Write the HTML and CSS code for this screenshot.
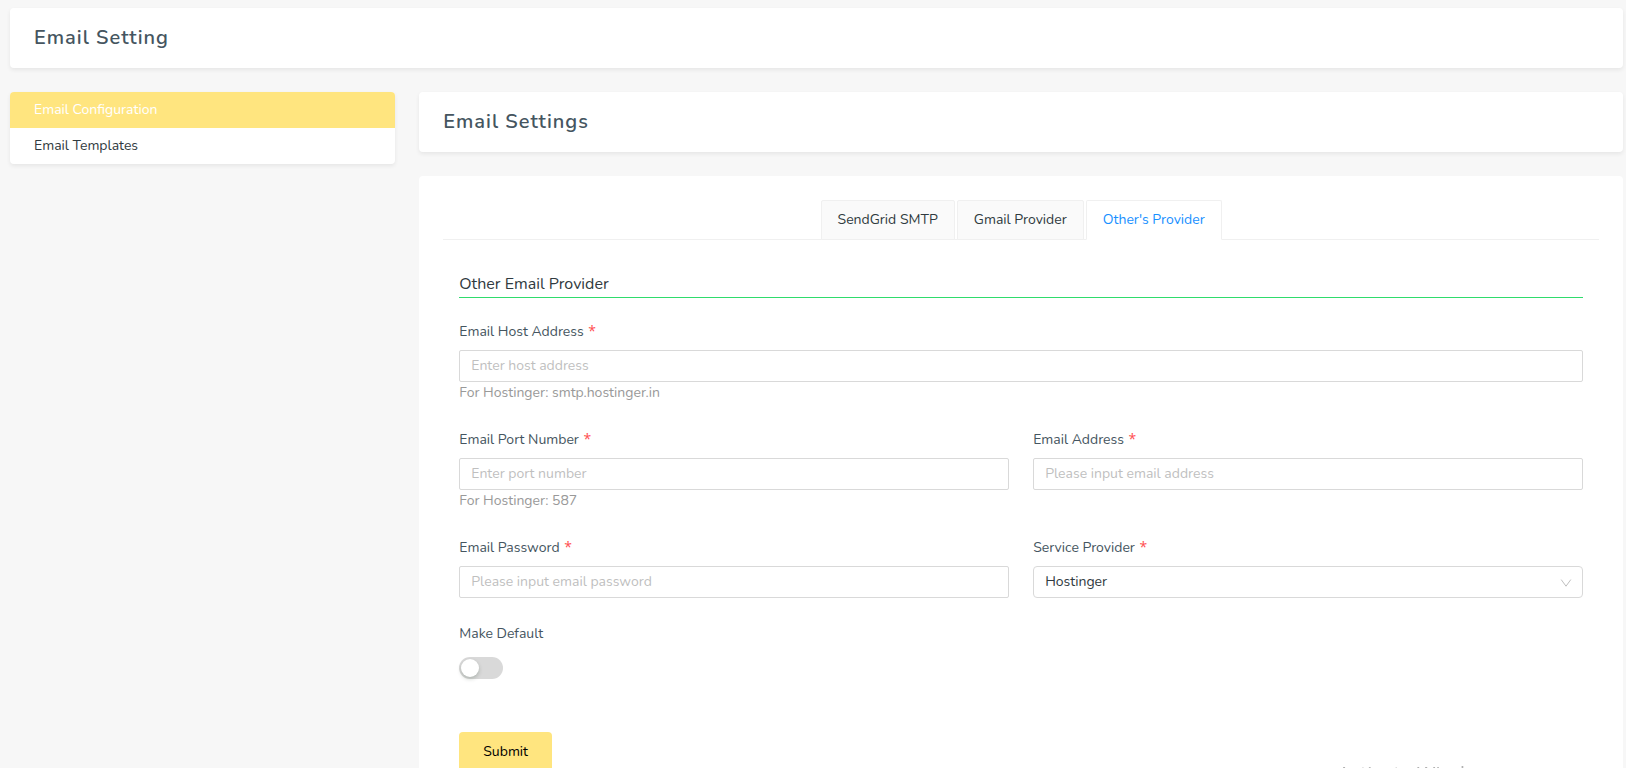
FILE: index.html
```html
<!DOCTYPE html>
<html lang="en">
<head>
<meta charset="utf-8">
<title>Email Setting</title>
<link rel="stylesheet" href="styles.css">
</head>
<body>
<div class="page">
  <header class="card title-card"><h1 class="title">Email Setting</h1></header>
  <div class="layout">
    <nav class="card side-nav">
      <a class="side-link side-link-active" href="#configuration">Email Configuration</a>
      <a class="side-link" href="#templates">Email Templates</a>
    </nav>
    <main class="content">
      <div class="card title-card"><h2 class="title">Email Settings</h2></div>
      <section class="panel">
        <div class="tabs" role="tablist">
          <button class="tab" type="button" role="tab" aria-selected="false">SendGrid SMTP</button>
          <button class="tab" type="button" role="tab" aria-selected="false">Gmail Provider</button>
          <button class="tab tab-active" type="button" role="tab" aria-selected="true">Other's Provider</button>
        </div>
        <form class="form">
          <h3 class="form-title">Other Email Provider</h3>
          <div class="fields">
            <div class="field field-wide">
              <label class="label" for="host">Email Host Address <span class="required">*</span></label>
              <input class="input" id="host" type="text" placeholder="Enter host address">
              <p class="help">For Hostinger: smtp.hostinger.in</p>
            </div>
            <div class="field">
              <label class="label" for="port">Email Port Number <span class="required">*</span></label>
              <input class="input" id="port" type="text" placeholder="Enter port number">
              <p class="help">For Hostinger: 587</p>
            </div>
            <div class="field">
              <label class="label" for="address">Email Address <span class="required">*</span></label>
              <input class="input" id="address" type="email" placeholder="Please input email address">
            </div>
            <div class="field">
              <label class="label" for="password">Email Password <span class="required">*</span></label>
              <input class="input" id="password" type="password" placeholder="Please input email password">
            </div>
            <div class="field">
              <label class="label" for="provider">Service Provider <span class="required">*</span></label>
              <div class="select-wrap">
                <select class="input select" id="provider"><option>Hostinger</option></select>
                <svg class="chevron" viewBox="0 0 12 12" aria-hidden="true"><path d="M1.2 2.6 6 9.2l4.800-6.600"/></svg>
              </div>
            </div>
            <div class="field field-wide">
              <label class="label" for="default">Make Default</label>
              <div class="switch-row"><input class="switch" id="default" type="checkbox" role="switch"></div>
            </div>
          </div>
          <button class="submit" type="submit">Submit</button>
        </form>
      </section>
    </main>
  </div>
</div>
<div class="watermark">Activate Windows</div>
</body>
</html>
```
FILE: styles.css
```css
* { box-sizing: border-box; }

body {
  margin: 0;
  height: 100vh;
  overflow: hidden;
  background: #f7f7f7;
  color: #303a40;
  font-family: Nunito, Lato, "Open Sans", sans-serif;
  font-size: 14px;
  line-height: 22px;
}

button, input, select { font: inherit; }

.page { padding: 8px 3px 24px 10px; }

.card {
  background: #fff;
  border-radius: 4px;
  box-shadow: 0 2px 4px rgba(0, 0, 0, 0.07);
}

.title-card { padding: 16px 24px; margin-bottom: 24px; }

.title {
  margin: 0;
  color: #455560;
  font-size: 20px;
  font-weight: 600;
  line-height: 28px;
  letter-spacing: 1px;
}

.layout {
  display: grid;
  grid-template-columns: repeat(4, 1fr);
  column-gap: 24px;
  align-items: start;
}

.content { grid-column: span 3; }

.side-nav { overflow: hidden; }

.side-link {
  display: block;
  padding: 7px 24px;
  color: #303a40;
  text-decoration: none;
}

.side-link-active { background: #ffe57f; color: #fff; }

.panel { padding: 24px; border-radius: 4px; background: #fff; }

.tabs {
  display: flex;
  justify-content: center;
  gap: 2px;
  border-bottom: 1px solid #f0f0f0;
}

.tab {
  height: 40px;
  margin-bottom: -1px;
  padding: 0 16px;
  border: 1px solid #f0f0f0;
  border-radius: 2px 2px 0 0;
  background: #fafafa;
  color: #303a40;
}

.tab-active { border-bottom-color: #fff; background: #fff; color: #1890ff; }

.form { padding: 32px 16px 0; }

.form-title {
  margin: 0 0 22px;
  padding-bottom: 1px;
  border-bottom: 1px solid #2fdc6c;
  font-size: 16px;
  font-weight: 400;
  line-height: 24px;
}

.fields {
  display: grid;
  grid-template-columns: 1fr 1fr;
  gap: 24px;
}

.field { display: flex; flex-direction: column; min-width: 0; }

.field-wide { grid-column: span 2; }

.label { padding: 1px 0 7px; color: #455560; }

.required {
  margin-left: 1px;
  color: #ff4d4f;
  font-family: "Open Sans", sans-serif;
  line-height: 1;
}

.input {
  width: 100%;
  height: 32px;
  padding: 0 11px 1px;
  border: 1px solid #d9d9d9;
  border-radius: 2px;
  background: #fff;
  color: #303a40;
}

.input::placeholder { color: #bfbfbf; }

.help { margin: 0; color: #999; }

.select-wrap { position: relative; }

.select { display: block; padding-bottom: 0; appearance: none; border-radius: 4px; }

.chevron {
  position: absolute;
  top: 11px;
  right: 11px;
  width: 12px;
  height: 12px;
  fill: none;
  stroke: #bfbfbf;
  pointer-events: none;
}

.switch-row { display: flex; align-items: center; height: 32px; }

.switch {
  appearance: none;
  width: 44px;
  height: 22px;
  margin: 0;
  padding: 2px;
  border-radius: 11px;
  background: #d9d9d9;
}

.switch::before {
  content: "";
  display: block;
  width: 18px;
  height: 18px;
  border-radius: 50%;
  background: #fff;
  box-shadow: 0 2px 4px rgba(0, 35, 11, 0.2);
}

.switch:checked { background: #1890ff; }

.switch:checked::before { margin-left: 22px; }

.submit {
  height: 40px;
  margin-top: 48px;
  padding: 0 24px;
  border: 0;
  border-radius: 4px;
  background: #ffe57f;
  color: #000;
}

.watermark {
  position: fixed;
  bottom: -20px;
  right: 124px;
  color: #b0b0b0;
  font-family: "Open Sans", sans-serif;
  font-size: 20px;
  line-height: 28px;
  pointer-events: none;
}
```
